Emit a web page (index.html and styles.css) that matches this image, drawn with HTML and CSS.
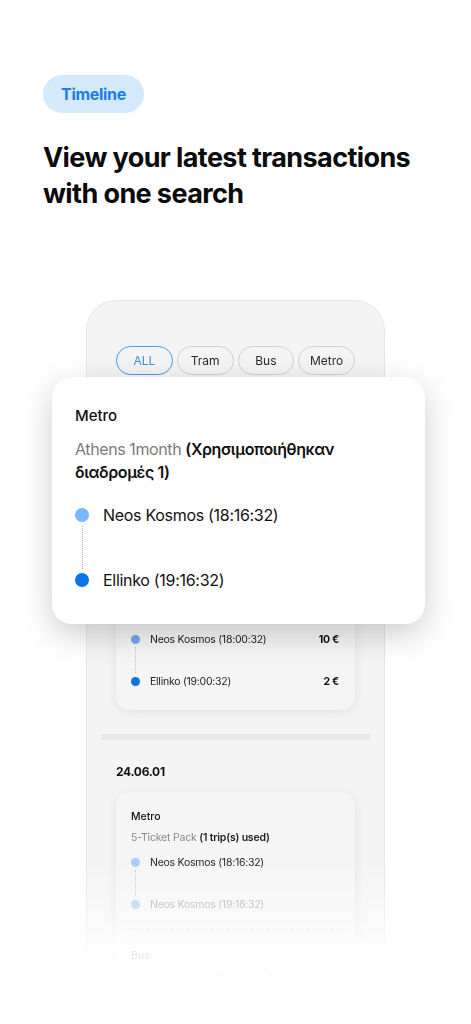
FILE: index.html
```html
<!DOCTYPE html>
<html lang="en">

<head>
    <meta charset="UTF-8">
    <meta name="viewport" content="width=device-width, initial-scale=1.0">
    <title>Timeline</title>
    <link rel="stylesheet" href="styles.css">
</head>

<body>
    <div class="intro">
        <span class="badge">Timeline</span>
        <h1 class="title">View your latest transactions<br>with one search</h1>
    </div>

    <div class="stage">
        <div class="phone">
            <div class="chips">
                <span class="chip active">ALL</span>
                <span class="chip">Tram</span>
                <span class="chip">Bus</span>
                <span class="chip">Metro</span>
            </div>

            <!-- top of this card sits under the popup -->
            <div class="card first">
                <div class="stop">
                    <span class="dot light"></span>
                    <span class="stop-name">Neos Kosmos (18:00:32)</span>
                    <span class="price">10 €</span>
                </div>
                <div class="link"></div>
                <div class="stop">
                    <span class="dot"></span>
                    <span class="stop-name">Ellinko (19:00:32)</span>
                    <span class="price">2 €</span>
                </div>
            </div>

            <div class="divider"></div>

            <div class="date">24.06.01</div>
            <div class="card">
                <div class="card-type">Metro</div>
                <div class="card-ticket">5-Ticket Pack <b>(1 trip(s) used)</b></div>
                <div class="stop">
                    <span class="dot pale"></span>
                    <span class="stop-name">Neos Kosmos (18:16:32)</span>
                </div>
                <div class="link"></div>
                <div class="stop">
                    <span class="dot pale"></span>
                    <span class="stop-name muted">Neos Kosmos (19:16:32)</span>
                </div>
                <div class="card-sep"></div>
                <div class="card-type">Bus</div>
                <div class="card-ticket">Athens 1month <b>(2 trip(s) used)</b></div>
                <div class="stop">
                    <span class="dot pale"></span>
                    <span class="stop-name">Syntagma (20:10:12)</span>
                </div>
            </div>
        </div>

        <div class="popup">
            <div class="popup-type">Metro</div>
            <div class="popup-ticket">
                Athens 1month <b>(Χρησιμοποιήθηκαν</b><br><b>διαδρομές 1)</b>
            </div>
            <div class="popup-stop">
                <span class="popup-dot light"></span>
                <span>Neos Kosmos (18:16:32)</span>
            </div>
            <div class="popup-link"></div>
            <div class="popup-stop">
                <span class="popup-dot"></span>
                <span>Ellinko (19:16:32)</span>
            </div>
        </div>
    </div>
</body>

</html>
```

FILE: styles.css
```css
* {
    padding: 0;
    margin: 0;
    box-sizing: border-box;
    font-family: Inter, "Noto Sans", sans-serif;
}

body {
    background-color: #fff;
    color: #111;
    height: 1024px;
    overflow: hidden;
}

.intro {
    padding: 75px 0 0 43px;
}

.badge {
    display: inline-block;
    height: 38px;
    line-height: 38px;
    padding: 0 18px;
    border-radius: 19px;
    background-color: #d5e9fd;
    color: #1a7ee8;
    font-size: 16px;
    font-weight: 700;
    letter-spacing: -0.3px;
}

.title {
    margin-top: 27px;
    font-size: 27px;
    line-height: 36px;
    font-weight: 700;
    letter-spacing: -0.6px;
    color: #0b0b0b;
}

.stage {
    position: relative;
    margin-top: 88px;
}

.phone {
    margin-left: 86px;
    width: 299px;
    height: 724px;
    padding: 45px 29px 0;
    background-color: #f4f4f4;
    border: 1px solid #e6e6e6;
    border-bottom: none;
    border-radius: 30px 30px 0 0;
    overflow: hidden;
    -webkit-mask-image: linear-gradient(to bottom, #000 560px, rgba(0, 0, 0, 0.55) 615px, rgba(0, 0, 0, 0.12) 650px, transparent 680px);
    mask-image: linear-gradient(to bottom, #000 560px, rgba(0, 0, 0, 0.55) 615px, rgba(0, 0, 0, 0.12) 650px, transparent 680px);
}

.chips {
    display: flex;
    gap: 4px;
}

.chip {
    width: 57px;
    height: 29px;
    line-height: 27px;
    text-align: center;
    border: 1px solid #cfcfcf;
    border-radius: 15px;
    font-size: 12px;
    color: #2a2a2a;
}

.chip.active {
    border-color: #4a9af0;
    color: #3a8ee8;
}

.date {
    margin-top: 24px;
    height: 16px;
    line-height: 16px;
    font-size: 12px;
    font-weight: 700;
    letter-spacing: -0.3px;
    color: #111;
}

.card {
    margin-top: 12px;
    padding: 17px 16px 21px 15px;
    border-radius: 14px;
    background-color: #f5f5f5;
    box-shadow: 0 2px 12px rgba(0, 0, 0, 0.08);
}

.card.first {
    margin-top: 194px;
    padding-top: 62px;
}

.card-type {
    height: 16px;
    line-height: 16px;
    font-size: 10.5px;
    font-weight: 500;
    color: #111;
}

.card-ticket {
    margin-top: 5px;
    height: 16px;
    line-height: 16px;
    font-size: 10.5px;
    letter-spacing: -0.2px;
    color: #888;
}

.card-ticket b {
    color: #222;
    font-weight: 600;
}

.stop {
    display: flex;
    align-items: center;
    height: 16px;
    margin-top: 8px;
    font-size: 10.5px;
    letter-spacing: -0.25px;
    color: #222;
}

.card.first .stop:first-child {
    margin-top: 0;
}

.link + .stop {
    margin-top: 0;
}

.link {
    height: 26px;
    margin-left: 4px;
    border-left: 1px dotted #c4c4c4;
}

.dot {
    width: 9px;
    height: 9px;
    border-radius: 50%;
    background-color: #0a74e8;
    margin-right: 10px;
    flex-shrink: 0;
}

.dot.light {
    background-color: #6fa8ec;
}

.dot.pale {
    background-color: #a6cdf7;
}

.stop-name {
    flex: 1;
}

.stop-name.muted {
    color: #a5a5a5;
}

.price {
    font-weight: 700;
    color: #111;
}

.card-sep {
    margin: 17px 0 18px;
    border-top: 1px dashed #d8d8d8;
}

.divider {
    margin: 24px -15px 0;
    height: 6px;
    background-color: #e9e9e9;
}

.popup {
    position: absolute;
    top: 77px;
    left: 52px;
    width: 373px;
    height: 247px;
    padding: 29px 23px 0;
    background-color: #fff;
    border-radius: 20px;
    box-shadow: 0 10px 32px rgba(0, 0, 0, 0.2);
}

.popup-type {
    height: 20px;
    line-height: 20px;
    font-size: 15px;
    font-weight: 500;
    color: #111;
}

.popup-ticket {
    margin-top: 12px;
    font-size: 16px;
    line-height: 23px;
    letter-spacing: -0.4px;
    color: #7a7a7a;
}

.popup-ticket b {
    color: #111;
    font-weight: 600;
}

.popup-stop {
    display: flex;
    align-items: center;
    height: 22px;
    margin-top: 20px;
    font-size: 16px;
    letter-spacing: -0.3px;
    color: #111;
}

.popup-link + .popup-stop {
    margin-top: 0;
}

.popup-link {
    height: 43px;
    margin-left: 6.5px;
    border-left: 1px dotted #aaa;
}

.popup-dot {
    width: 14px;
    height: 14px;
    border-radius: 50%;
    background-color: #0a74e8;
    margin-right: 14px;
    flex-shrink: 0;
}

.popup-dot.light {
    background-color: #7ab8fb;
}
```
